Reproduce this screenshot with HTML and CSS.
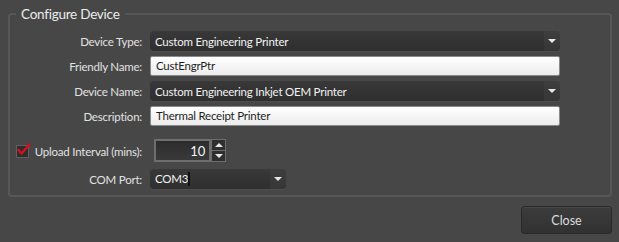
FILE: index.html
```html
<!DOCTYPE html>
<html lang="en">
<head>
  <meta charset="UTF-8">
  <title>Configure Device</title>
  <link rel="stylesheet" href="styles.css">
</head>
<body>

  <fieldset class="group">
    <legend>Configure Device</legend>

    <div class="form">
      <label class="lbl">Device Type:</label>
      <div class="combo wide">
        <span class="value">Custom Engineering Printer</span>
        <span class="arrow"><span class="tri"></span></span>
      </div>

      <label class="lbl">Friendly Name:</label>
      <div class="textbox wide">CustEngrPtr</div>

      <label class="lbl">Device Name:</label>
      <div class="combo wide">
        <span class="value">Custom Engineering Inkjet OEM Printer</span>
        <span class="arrow"><span class="tri"></span></span>
      </div>

      <label class="lbl">Description:</label>
      <div class="textbox wide">Thermal Receipt Printer</div>

      <label class="lbl check-lbl">
        <span class="checkbox">
          <svg width="16" height="14" viewBox="0 0 16 14">
            <path d="M2.5 7 L5.5 10.5 L13.5 1.5" fill="none" stroke="#d40f1f" stroke-width="2.6" stroke-linecap="round" stroke-linejoin="round"/>
          </svg>
        </span>
        <span class="check-text">Upload Interval (mins):</span>
      </label>
      <div class="spinner">
        <div class="spin-box">10</div>
        <div class="spin-btns">
          <span class="spin-btn"><span class="tri up"></span></span>
          <span class="spin-btn"><span class="tri"></span></span>
        </div>
      </div>

      <label class="lbl">COM Port:</label>
      <div class="combo short">
        <span class="value">COM3<span class="caret"></span></span>
        <span class="arrow"><span class="tri"></span></span>
      </div>
    </div>
  </fieldset>

  <div class="footer">
    <button class="btn">Close</button>
  </div>

</body>
</html>
```

FILE: styles.css
```css
body {
  margin: 0;
  background-color: #474747;
  font-family: Lato, "Open Sans", sans-serif;
  font-size: 11.5px;
  letter-spacing: -0.22px;
  color: #e4e4e4;
  width: 619px;
  height: 242px;
  overflow: hidden;
}

.group {
  margin: 4px 8px 0 8px;
  padding: 7px 50px 6px 0;
  border: 2px solid #575757;
  border-radius: 4px;
}

.group legend {
  font-size: 13.5px;
  letter-spacing: -0.25px;
  line-height: 20px;
  color: #ececec;
  padding: 0 5px;
  margin-left: 6px;
}

.form {
  display: grid;
  grid-template-columns: 132px 1fr;
  column-gap: 8px;
  row-gap: 5px;
  align-items: center;
}

.lbl {
  text-align: right;
  color: #e2e2e2;
  white-space: nowrap;
}

.wide {
  width: 410px;
}

.short {
  width: 136px;
}

.combo {
  height: 20px;
  box-sizing: border-box;
  display: flex;
  align-items: center;
  background: linear-gradient(#383838, #2f2f2f);
  border-radius: 4px;
  box-shadow: 0 1px 0 rgba(255,255,255,0.04);
  color: #f2f2f2;
  overflow: hidden;
}

.combo .value {
  flex: 1;
  padding-left: 5px;
  white-space: nowrap;
}

.combo .arrow {
  width: 16px;
  height: 100%;
  display: flex;
  align-items: center;
  justify-content: center;
  background: linear-gradient(#3e3e3e, #363636);
}

.tri {
  width: 0;
  height: 0;
  border-left: 4px solid transparent;
  border-right: 4px solid transparent;
  border-top: 4px solid #e8e8e8;
}

.tri.up {
  border-top: none;
  border-bottom: 4px solid #e8e8e8;
}

.caret {
  display: inline-block;
  width: 2px;
  height: 14px;
  background: #111;
  vertical-align: -3px;
}

.textbox {
  height: 20px;
  box-sizing: border-box;
  padding-left: 5px;
  line-height: 18px;
  background: linear-gradient(#ffffff, #ececec);
  border: 1px solid #8a8a8a;
  border-radius: 2px;
  color: #1e1e1e;
}

.check-lbl {
  display: flex;
  align-items: center;
  justify-content: space-between;
  margin-top: 8px;
  padding-left: 6px;
}

.checkbox {
  position: relative;
  flex-shrink: 0;
  width: 11px;
  height: 11px;
  background: #2e2e2e;
  border: 1px solid #606060;
}

.checkbox svg {
  position: absolute;
  left: -1px;
  top: -3px;
}

.spinner {
  display: flex;
  margin-top: 8px;
  margin-left: 4px;
  margin-bottom: 2px;
}

.spin-box {
  width: 57px;
  height: 23px;
  box-sizing: border-box;
  border: 2px solid #6e6e6e;
  background: linear-gradient(#2c2c2c, #3a3a3a);
  text-align: right;
  padding-right: 4px;
  font-size: 13px;
  line-height: 20px;
  color: #f4f4f4;
}

.spin-btns {
  display: flex;
  flex-direction: column;
}

.spin-btn {
  width: 15px;
  height: 12px;
  box-sizing: border-box;
  border: 1px solid #6e6e6e;
  background: #2f2f2f;
  display: flex;
  align-items: center;
  justify-content: center;
}

.spin-btn + .spin-btn {
  height: 11px;
  border-top: none;
}

.footer {
  display: flex;
  justify-content: flex-end;
  padding: 9px 7px 0 0;
}

.btn {
  width: 91px;
  height: 28px;
  font-family: Lato, "Open Sans", sans-serif;
  font-size: 12.5px;
  color: #dcdcdc;
  background: linear-gradient(#3c3c3c, #313131);
  border: 1px solid #2a2a2a;
  border-radius: 3px;
  box-shadow: inset 0 1px 0 rgba(255,255,255,0.06);
}
```
